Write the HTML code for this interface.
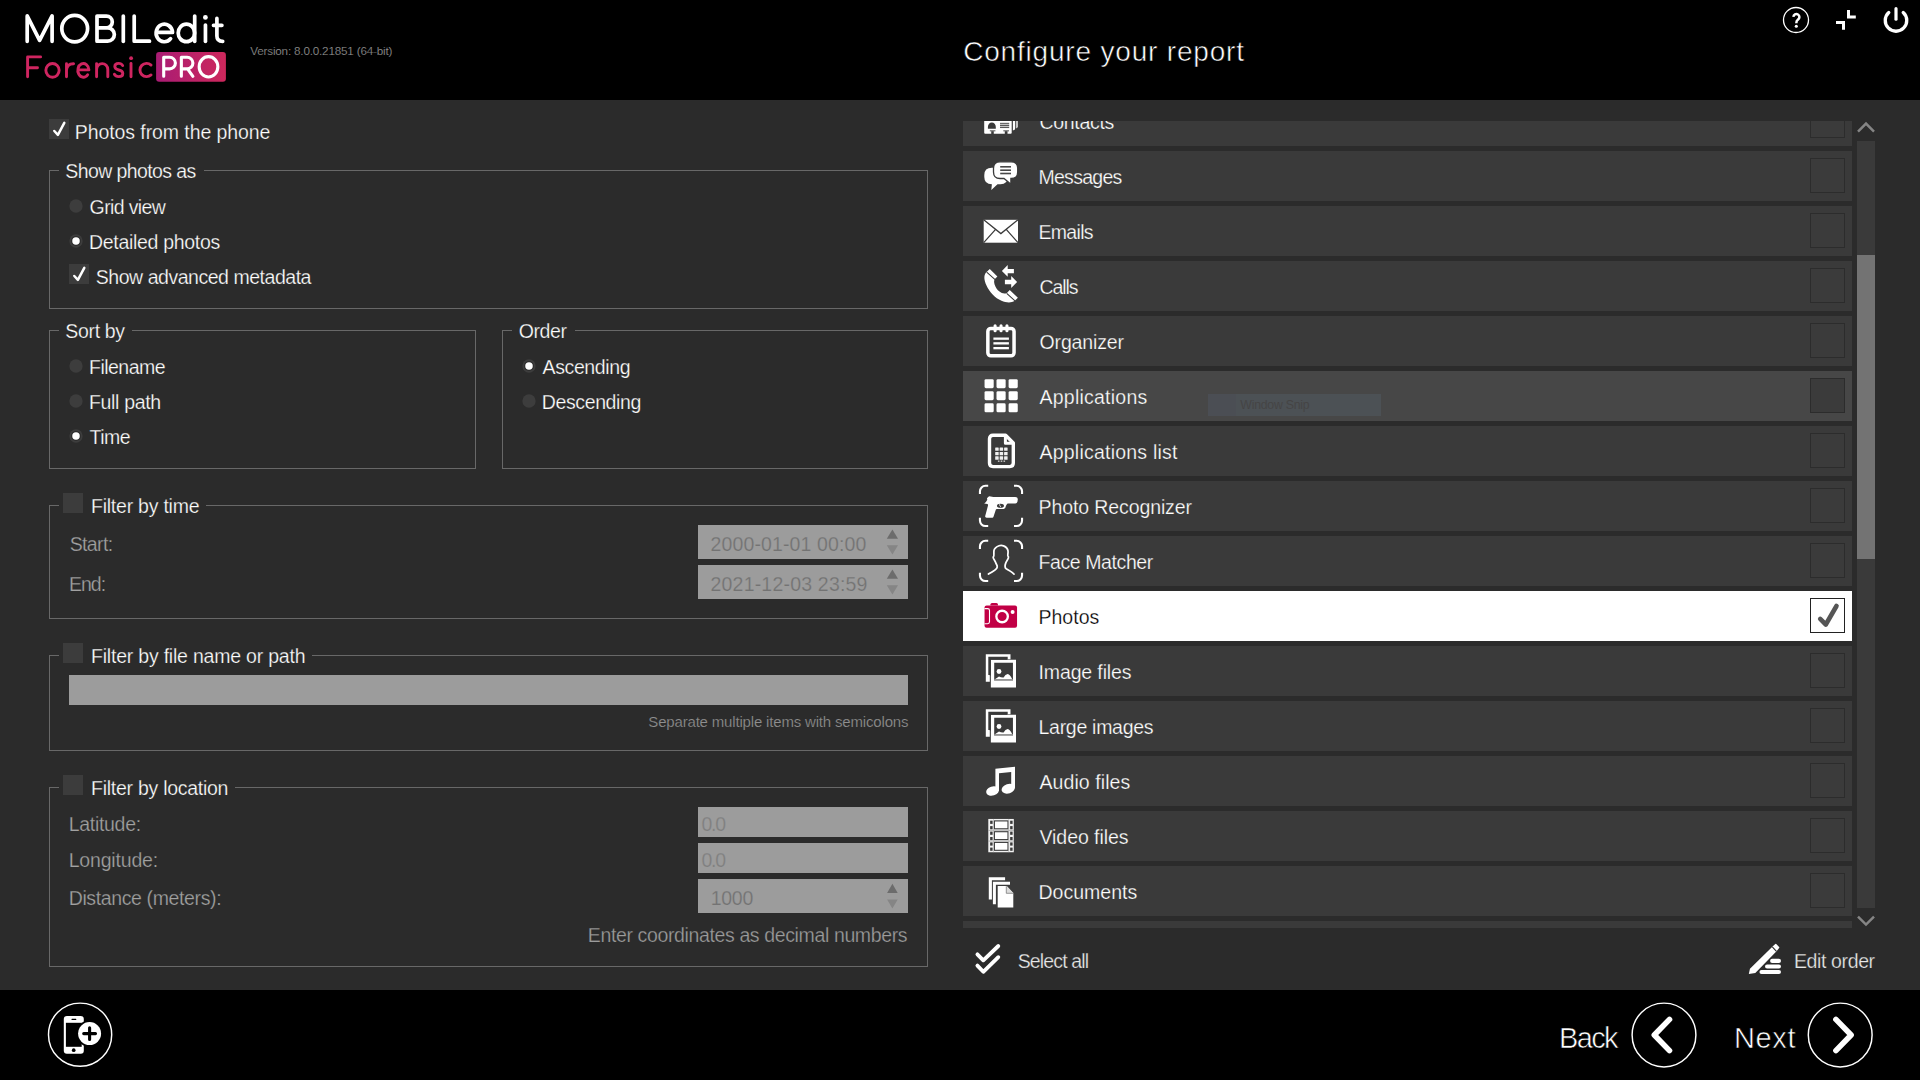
<!DOCTYPE html>
<html lang="en"><head><meta charset="utf-8"><title>MOBILedit Forensic PRO - Configure your report</title>
<style>
html,body{margin:0;padding:0;width:1920px;height:1080px;overflow:hidden;background:#000;font-family:"Liberation Sans",sans-serif;}
body{position:relative}
.hdr{position:absolute;left:0;top:0;width:1920px;height:100px;background:#000}
.main{position:absolute;left:0;top:100px;width:1920px;height:890px;background:#2b2b2b}
.ftr{position:absolute;left:0;top:990px;width:1920px;height:90px;background:#000}
.t{position:absolute;white-space:nowrap;font-family:"Liberation Sans",sans-serif;}
.abs{position:absolute}
.gb{position:absolute;border:1px solid #686868;box-sizing:border-box}
.gap{position:absolute;height:1px;background:#2b2b2b}
.chk{position:absolute;width:20px;height:20px;background:#3c3c3c}
.rad{position:absolute;width:13px;height:13px;border-radius:50%;background:#3c3c3c}
.rad.on::after{content:"";position:absolute;left:3px;top:3px;width:7px;height:7px;border-radius:50%;background:#fff}
.inp{position:absolute;background:#9c9c9c}
.list{position:absolute;overflow:hidden}
.row{position:absolute;left:0;width:889px;height:50px;background:#3a3a3a}
.row.hov{background:#474747}
.row.sel{background:#fff}
.cb{position:absolute;left:847px;top:7px;width:35px;height:35px;box-sizing:border-box;border:1px solid #2c2c2c;background:#3b3b3b}
.row.hov .cb{background:#3b3b3b}
.row.sel .cb{background:#fff;border-color:#222}
.ic{position:absolute}
svg{position:absolute;overflow:visible}
</style></head><body>

<div class="hdr"></div><div class="main"></div><div class="ftr"></div>
<svg style="left:0;top:0" width="240" height="100" viewBox="0 0 240 100">
<defs><linearGradient id="pg" x1="0" y1="0" x2="1" y2="0"><stop offset="0" stop-color="#a91c74"/><stop offset="1" stop-color="#cd285c"/></linearGradient></defs>
<g fill="none" stroke="#fff" stroke-width="3.7" stroke-linecap="round" stroke-linejoin="round">
<path d="M27.2 41.3 V15.9 L39.6 40.3 L52.1 15.9 V41.3"/>
<ellipse cx="74.7" cy="28.6" rx="12.9" ry="13.2"/>
<path d="M97 16.1 V41.2 M97 16.1 H106.4 A5.9 5.9 0 0 1 106.4 27.9 H97 M106.4 27.9 H107.7 A6.65 6.65 0 0 1 107.7 41.2 H97"/>
<path d="M123.3 16 V41.3"/>
<path d="M134.2 16 V41.2 H149.5"/>
<path d="M156.4 32.4 H172.5 A8.2 8.8 0 1 0 170.6 38.6"/>
<ellipse cx="186.4" cy="32.9" rx="8.2" ry="8.8"/><path d="M194.7 16 V41.3"/>
<path d="M205.45 25 V41.3"/>
<path d="M216.9 18.4 V36 Q216.9 41.3 222.7 41.3 M213.5 25.3 H221.9"/>
</g>
<circle cx="205.4" cy="17.4" r="2.4" fill="#fff"/>
<g fill="none" stroke="#cf2560" stroke-width="2.9" stroke-linecap="round" stroke-linejoin="round">
<path d="M27.6 76.8 V56.9 H40.6 M27.6 67.75 H37.5"/>
<ellipse cx="52.5" cy="70.35" rx="6.65" ry="6.85"/>
<path d="M66.5 63.8 V76.8 M66.5 70.3 Q66.8 63.6 73.6 63.7"/>
<path d="M77.9 69.9 H88.9 A5.55 6.85 0 1 0 87.65 74.75"/>
<path d="M96.6 63.6 V76.8 M96.6 69.5 A5.6 5.9 0 0 1 107.8 69.5 V76.8"/>
<path d="M122.7 65.6 C121.8 64 120.4 63.4 118.6 63.4 C116.2 63.4 114.8 64.9 114.8 66.6 C114.8 68.6 116.4 69.4 118.7 70 C121.2 70.6 122.8 71.5 122.8 73.4 C122.8 75.3 121.2 76.6 118.7 76.6 C116.7 76.6 115.2 75.8 114.4 74.3"/>
<path d="M131 63.4 V76.8"/>
<path d="M151.05 65.06 A6.65 6.65 0 1 0 151.05 74.94"/>
</g>
<circle cx="131.1" cy="58.2" r="1.9" fill="#cf2560"/>
<rect x="156.1" y="52.1" width="69.8" height="29.6" rx="3" fill="url(#pg)"/>
<g fill="none" stroke="#fff" stroke-width="3.1" stroke-linecap="round" stroke-linejoin="round">
<path d="M163.7 76.3 V57.3 H169.6 A5.8 5.8 0 0 1 169.6 68.9 H163.7"/>
<path d="M181.35 76.3 V57.3 H187.1 A5.8 5.8 0 0 1 187.1 68.9 H181.35 M187.6 68.9 L192.9 76.3"/>
<ellipse cx="208.5" cy="66.8" rx="9.35" ry="10.15"/>
</g></svg>
<svg style="left:1770px;top:0" width="150" height="50" viewBox="1770 0 150 50">
<circle cx="1796" cy="20" r="12.5" fill="none" stroke="#fff" stroke-width="1.3"/>
<path d="M1793.4 16.9 A3 3 0 1 1 1798 19.6 Q1796.3 20.8 1796.3 23.2" fill="none" stroke="#fff" stroke-width="2.5"/>
<circle cx="1796.3" cy="26.2" r="1.55" fill="#fff"/>
<path d="M1848.5 10 V17.1 H1855.8 M1836 22.5 H1843.5 V29.8" fill="none" stroke="#fff" stroke-width="3"/>
<path d="M1888.8 12.5 A10.75 10.75 0 1 0 1903.2 12.5" fill="none" stroke="#fff" stroke-width="3.3" stroke-linecap="round"/>
<path d="M1896 8.7 V19.2" fill="none" stroke="#fff" stroke-width="3.2" stroke-linecap="round"/>
</svg>
<!-- LEFT PANEL -->
<div class="chk" style="left:49px;top:119px"></div>
<svg style="left:49px;top:119px" width="20" height="20" viewBox="0 0 20 20"><path d="M5.3 12 L8.9 15.8 L15.3 3.9" fill="none" stroke="#fff" stroke-width="2.5" stroke-linecap="round" stroke-linejoin="round"/></svg>

<div class="gb" style="left:49px;top:170px;width:879px;height:139px"></div>
<div class="gap" style="left:59px;top:170px;width:145px"></div>
<svg style="left:67.9px;top:197.9px" width="16" height="16" viewBox="0 0 16 16"><circle cx="8" cy="8" r="6.65" fill="#3d3d3d"/></svg>
<svg style="left:67.9px;top:233.0px" width="16" height="16" viewBox="0 0 16 16"><circle cx="8" cy="8" r="6.65" fill="#3d3d3d"/><circle cx="8" cy="8" r="4.9" fill="#2d2d2d"/><circle cx="8" cy="8" r="3.75" fill="#fff"/></svg>
<div class="chk" style="left:69px;top:264px"></div>
<svg style="left:69px;top:264px" width="20" height="20" viewBox="0 0 20 20"><path d="M5.3 12 L8.9 15.8 L15.3 3.9" fill="none" stroke="#fff" stroke-width="2.5" stroke-linecap="round" stroke-linejoin="round"/></svg>

<div class="gb" style="left:49px;top:330px;width:427px;height:139px"></div>
<div class="gap" style="left:59px;top:330px;width:73px"></div>
<svg style="left:67.9px;top:358.2px" width="16" height="16" viewBox="0 0 16 16"><circle cx="8" cy="8" r="6.65" fill="#3d3d3d"/></svg>
<svg style="left:67.9px;top:393.3px" width="16" height="16" viewBox="0 0 16 16"><circle cx="8" cy="8" r="6.65" fill="#3d3d3d"/></svg>
<svg style="left:67.9px;top:428.3px" width="16" height="16" viewBox="0 0 16 16"><circle cx="8" cy="8" r="6.65" fill="#3d3d3d"/><circle cx="8" cy="8" r="4.9" fill="#2d2d2d"/><circle cx="8" cy="8" r="3.75" fill="#fff"/></svg>

<div class="gb" style="left:502px;top:330px;width:426px;height:139px"></div>
<div class="gap" style="left:512px;top:330px;width:63px"></div>
<svg style="left:521.2px;top:358.2px" width="16" height="16" viewBox="0 0 16 16"><circle cx="8" cy="8" r="6.65" fill="#3d3d3d"/><circle cx="8" cy="8" r="4.9" fill="#2d2d2d"/><circle cx="8" cy="8" r="3.75" fill="#fff"/></svg>
<svg style="left:521.2px;top:393.3px" width="16" height="16" viewBox="0 0 16 16"><circle cx="8" cy="8" r="6.65" fill="#3d3d3d"/></svg>

<div class="gb" style="left:49px;top:505px;width:879px;height:114px"></div>
<div class="gap" style="left:59px;top:505px;width:147px"></div>
<div class="chk" style="left:63px;top:493px"></div>
<div class="inp" style="left:698px;top:525px;width:210px;height:34px"></div>
<div class="inp" style="left:698px;top:565px;width:210px;height:34px"></div>
<svg style="left:886px;top:525px" width="14" height="34" viewBox="0 0 14 34"><path d="M6.4 4.6 L12 13.7 L0.8 13.7Z" fill="#6c6c6c"/><path d="M0.8 20.3 L12 20.3 L6.4 29.4Z" fill="#858585"/></svg>
<svg style="left:886px;top:565px" width="14" height="34" viewBox="0 0 14 34"><path d="M6.4 4.6 L12 13.7 L0.8 13.7Z" fill="#6c6c6c"/><path d="M0.8 20.3 L12 20.3 L6.4 29.4Z" fill="#858585"/></svg>

<div class="gb" style="left:49px;top:655px;width:879px;height:96px"></div>
<div class="gap" style="left:59px;top:655px;width:253px"></div>
<div class="chk" style="left:63px;top:643px"></div>
<div class="inp" style="left:69px;top:675px;width:839px;height:30px"></div>

<div class="gb" style="left:49px;top:787px;width:879px;height:180px"></div>
<div class="gap" style="left:59px;top:787px;width:176px"></div>
<div class="chk" style="left:63px;top:775px"></div>
<div class="inp" style="left:698px;top:807px;width:210px;height:30px"></div>
<div class="inp" style="left:698px;top:843px;width:210px;height:30px"></div>
<div class="inp" style="left:698px;top:879px;width:210px;height:34px"></div>
<svg style="left:886px;top:879px" width="14" height="34" viewBox="0 0 14 34"><path d="M6.4 4.7 L11.7 13.9 L1.1 13.9Z" fill="#6c6c6c"/><path d="M1.1 20.4 L11.7 20.4 L6.4 29.4Z" fill="#858585"/></svg>

<div class="list" style="left:963px;top:121px;width:889px;height:807px">
<div class="row" style="top:-25px"><div class="cb"></div></div>
<svg class="ic" style="left:0;top:-25px" width="80" height="50" viewBox="0 0 80 50"><g fill="#fff"><path d="M49.9 12 H52 V33.4 L49.9 34.6 Z"/><path d="M52.8 12 H53.7 V32 L52.8 32.6 Z"/><path d="M54.1 12 H54.8 V31.3 L54.1 31.7 Z"/>
<rect x="21.2" y="12" width="27.5" height="25.8" rx="1"/></g>
<path d="M24.9 32.7 V31 A3.95 4.6 0 0 1 32.8 31 V32.7 Z" fill="#3a3a3a"/>
<g fill="#c4c4c4"><rect x="37" y="27.8" width="9.2" height="1.1"/><rect x="37" y="29.95" width="9.2" height="1.1"/></g>
<g fill="#484848"><rect x="37" y="26.85" width="9.2" height="0.95"/><rect x="37" y="28.95" width="9.2" height="0.95"/><rect x="37" y="31.1" width="9.2" height="0.95"/></g>
<g fill="#3a3a3a"><rect x="26.8" y="34.4" width="5.6" height="0.9"/><rect x="28.25" y="35.2" width="2.5" height="2.8"/><rect x="40.3" y="34.4" width="5.7" height="0.9"/><rect x="41.8" y="35.2" width="2.7" height="2.8"/></g></svg>
<div class="row" style="top:30px"><div class="cb"></div></div>
<svg class="ic" style="left:0;top:30px" width="80" height="50" viewBox="0 0 80 50"><path d="M28.8 16.7 H37.5 Q44.8 16.7 44.8 24 V26 Q44.8 33.3 37.5 33.3 H34.5 L28.3 38.9 L28.9 33.3 H28.8 Q21.3 33.3 21.3 26 V24 Q21.3 16.7 28.8 16.7 Z" fill="#fff"/>
<path d="M37 10.8 H48.2 Q54.7 10.8 54.7 17.3 V21 Q54.7 27.5 48.2 27.5 H47.9 V33.2 L41 27.5 H37 Q30.5 27.5 30.5 21 V17.3 Q30.5 10.8 37 10.8 Z" fill="#fff" stroke="#3a3a3a" stroke-width="1.3"/>
<g fill="#484848"><rect x="37.2" y="15" width="10.8" height="1.6"/><rect x="37.2" y="18.4" width="10.8" height="1.6"/><rect x="37.2" y="21.7" width="10.8" height="1.6"/></g></svg>
<div class="row" style="top:85px"><div class="cb"></div></div>
<svg class="ic" style="left:0;top:85px" width="80" height="50" viewBox="0 0 80 50"><rect x="20.7" y="13.8" width="34.3" height="22.9" fill="#fff"/>
<path d="M20.7 13.8 L37.9 27.6 L55 13.8 M20.7 36.7 L32.6 23.4 M55 36.7 L43.2 23.4" fill="none" stroke="#3a3a3a" stroke-width="1.25"/></svg>
<div class="row" style="top:140px"><div class="cb"></div></div>
<svg class="ic" style="left:0;top:140px" width="80" height="50" viewBox="0 0 80 50"><path d="M26.8 8.1 L34.4 15.6 L31.9 18.1 C30.8 19.5 31 21.5 31.6 23.4 C32.5 26.3 34.2 28.7 36.5 30.6 C38.6 32.4 41.2 33.2 43.9 32.1 L46.7 29 L54.9 36.7 L51.5 40 C48.5 42 43 41.8 38.5 39.8 C32 37 26.5 31 23.5 24.5 C21 19 20.6 14.5 23 11.5 Z" fill="#fff"/>
<path d="M23.7 11.2 L32.1 18.6 M43.7 32.3 L52 39.8" fill="none" stroke="#3a3a3a" stroke-width="1.1"/>
<path d="M38.9 9.9 L44.7 4.1 V7.9 H50.9 V12.2 H44.7 V15.8 Z M54.1 20.9 L48.2 15.1 V18.8 H41.9 V23.2 H48.2 V27 Z" fill="#fff"/></svg>
<div class="row" style="top:195px"><div class="cb"></div></div>
<svg class="ic" style="left:0;top:195px" width="80" height="50" viewBox="0 0 80 50"><rect x="24.85" y="12.45" width="26.2" height="27.35" rx="3" fill="none" stroke="#fff" stroke-width="3.5"/>
<g stroke="#fff" stroke-width="3.1" stroke-linecap="round"><path d="M32.1 9.7 V14.8 M38.05 9.7 V14.8 M43.95 9.7 V14.8"/></g>
<g fill="#fff"><rect x="30.4" y="21.5" width="15.5" height="2.3"/><rect x="30.4" y="26.2" width="15.5" height="2.3"/><rect x="30.4" y="31" width="15.5" height="2.3"/></g></svg>
<div class="row hov" style="top:250px"><div class="cb"></div></div>
<svg class="ic" style="left:0;top:250px" width="80" height="50" viewBox="0 0 80 50"><g fill="#fff"><rect x="21.55" y="8.15" width="9.15" height="9.05" rx="1.4"/><rect x="33.5" y="8.15" width="9.15" height="9.05" rx="1.4"/><rect x="45.6" y="8.15" width="9.15" height="9.05" rx="1.4"/><rect x="21.55" y="20.2" width="9.15" height="9.05" rx="1.4"/><rect x="33.5" y="20.2" width="9.15" height="9.05" rx="1.4"/><rect x="45.6" y="20.2" width="9.15" height="9.05" rx="1.4"/><rect x="21.55" y="32.3" width="9.15" height="9.05" rx="1.4"/><rect x="33.5" y="32.3" width="9.15" height="9.05" rx="1.4"/><rect x="45.6" y="32.3" width="9.15" height="9.05" rx="1.4"/></g></svg>
<div class="row" style="top:305px"><div class="cb"></div></div>
<svg class="ic" style="left:0;top:305px" width="80" height="50" viewBox="0 0 80 50"><path d="M26.5 12.8 Q26.5 9.3 30 9.3 H42.6 L50.3 17 V37.1 Q50.3 40.6 46.8 40.6 H30 Q26.5 40.6 26.5 37.1 Z" fill="none" stroke="#fff" stroke-width="3.4" stroke-linejoin="round"/>
<path d="M42.4 9.6 V17.2 H50" fill="none" stroke="#fff" stroke-width="3" stroke-linejoin="round"/>
<g fill="#f0f0f0"><rect x="32.2" y="21.4" width="3.5" height="3.4" rx="0.5"/><rect x="36.65" y="21.4" width="3.5" height="3.4" rx="0.5"/><rect x="41.1" y="21.4" width="3.5" height="3.4" rx="0.5"/><rect x="32.2" y="25.95" width="3.5" height="3.4" rx="0.5"/><rect x="36.65" y="25.95" width="3.5" height="3.4" rx="0.5"/><rect x="41.1" y="25.95" width="3.5" height="3.4" rx="0.5"/><rect x="32.2" y="30.35" width="3.5" height="3.4" rx="0.5"/><rect x="36.65" y="30.35" width="3.5" height="3.4" rx="0.5"/><rect x="41.1" y="30.35" width="3.5" height="3.4" rx="0.5"/><rect x="34.9" y="34.6" width="1.6" height="1.1"/><rect x="37.7" y="34.6" width="1.6" height="1.1"/><rect x="40.5" y="34.6" width="1.6" height="1.1"/></g></svg>
<div class="row" style="top:360px"><div class="cb"></div></div>
<svg class="ic" style="left:0;top:360px" width="80" height="50" viewBox="0 0 80 50"><g fill="none" stroke="#fff" stroke-width="2.1"><path d="M16.95 13.1 V10.3 A5.5 5.5 0 0 1 22.45 4.8 H25.2"/><path d="M51 4.8 H53.55 A5.5 5.5 0 0 1 59.05 10.3 V13.1"/><path d="M16.95 36.8 V39.55 A5.5 5.5 0 0 0 22.45 45.05 H25.2"/><path d="M51 45.05 H53.55 A5.5 5.5 0 0 0 59.05 39.55 V36.8"/></g><path d="M26.3 15.2 L30.3 15.9 H52.1 Q54.8 15.9 54.8 18.2 Q54.9 22.5 52.1 22.55 H44.6 Q43.3 23.6 42.9 25 Q42.5 27.9 40.8 27.9 H33.9 Q33.1 27.9 32.9 28.6 L30.4 35.9 Q30.1 36.7 29.4 36.7 H23.6 Q21.8 36.7 22.2 35 L25 24.6 Q25.2 23.3 24.3 23.1 L21.2 22.55 Q23.2 21.3 24.3 18.8 L23.9 17.4 L25.1 16.1 Z" fill="#fff"/>
<ellipse cx="37.45" cy="24.8" rx="3.5" ry="2" fill="#3a3a3a"/><path d="M36.6 23.2 Q36.6 25.2 37.9 26" fill="none" stroke="#fff" stroke-width="0.8"/></svg>
<div class="row" style="top:415px"><div class="cb"></div></div>
<svg class="ic" style="left:0;top:415px" width="80" height="50" viewBox="0 0 80 50"><g fill="none" stroke="#fff" stroke-width="2.1"><path d="M16.95 13.1 V10.3 A5.5 5.5 0 0 1 22.45 4.8 H25.2"/><path d="M51 4.8 H53.55 A5.5 5.5 0 0 1 59.05 10.3 V13.1"/><path d="M16.95 36.8 V39.55 A5.5 5.5 0 0 0 22.45 45.05 H25.2"/><path d="M51 45.05 H53.55 A5.5 5.5 0 0 0 59.05 39.55 V36.8"/></g><path d="M25.44 38.1 L29.00 35.89 Q32.56 33.67 33.33 32.69 Q34.1 31.7 34.22 30.80 Q34.33 29.9 33.55 28.55 Q32.78 27.2 32.44 26.10 Q32.1 25 31.21 23.66 Q30.33 22.33 30.21 21.66 Q30.1 21 30.55 20.55 Q31 20.1 30.89 17.89 Q30.78 15.67 30.99 14.34 Q31.2 13 32.55 11.78 Q33.9 10.56 36.11 9.78 Q38.33 9 40.55 9.89 Q42.78 10.78 43.78 12.11 Q44.78 13.44 44.99 14.77 Q45.2 16.1 44.88 18.00 Q44.56 19.9 45.12 20.45 Q45.67 21 45.34 22.10 Q45 23.2 44.10 24.55 Q43.2 25.9 42.55 27.65 Q41.9 29.4 42.10 30.75 Q42.3 32.1 42.98 32.65 Q43.67 33.2 45.67 34.20 Q47.67 35.2 49.34 36.65 L51 38.1" fill="none" stroke="#fff" stroke-width="1.75" stroke-linecap="round" stroke-linejoin="round"/></svg>
<div class="row sel" style="top:470px"><div class="cb"></div></div>
<svg class="ic" style="left:0;top:470px" width="80" height="50" viewBox="0 0 80 50"><path d="M27.4 14.6 V13.6 Q27.4 12 29 12 H33.4 Q35 12 35 13.6 V14.6 Z" fill="#c10045"/>
<rect x="21.55" y="14.6" width="32.5" height="22.1" rx="2" fill="#c10045"/>
<circle cx="39.1" cy="25.5" r="5.75" fill="none" stroke="#fff" stroke-width="2.3"/>
<circle cx="49.6" cy="20.9" r="2" fill="#fff"/>
<path d="M21.55 17.6 H24.6 Q26.5 17.6 26.5 19.5 V30.8 Q26.5 32.7 24.6 32.7 H21.55" fill="none" stroke="#fff" stroke-width="1.1"/></svg>
<div class="row" style="top:525px"><div class="cb"></div></div>
<svg class="ic" style="left:0;top:525px" width="80" height="50" viewBox="0 0 80 50"><path d="M22.8 8.15 H47.5 V13.2 H44.7 V10.7 H25.3 V29 H26.8 V35.85 H22.8 Z" fill="#fff"/>
<path d="M27.85 13.75 H53 V41.55 H27.85 Z M31.2 16.8 V34.6 H49.95 V16.8 Z" fill="#fff" fill-rule="evenodd" stroke="#3a3a3a" stroke-width="0"/>
<circle cx="36" cy="25.5" r="2.4" fill="#fff"/>
<path d="M31.9 33.3 L36 30.5 Q38.3 31.8 40.6 31.5 Q42.3 28.2 44.7 28 Q47 28.2 49.2 33.3 Z" fill="#fff"/>
<rect x="31.2" y="33.3" width="18.75" height="1.3" fill="#aaa"/>
<path d="M27.35 29.6 V13.25 H44.2" fill="none" stroke="#3a3a3a" stroke-width="1"/></svg>
<div class="row" style="top:580px"><div class="cb"></div></div>
<svg class="ic" style="left:0;top:580px" width="80" height="50" viewBox="0 0 80 50"><path d="M22.8 8.15 H47.5 V13.2 H44.7 V10.7 H25.3 V29 H26.8 V35.85 H22.8 Z" fill="#fff"/>
<path d="M27.85 13.75 H53 V41.55 H27.85 Z M31.2 16.8 V34.6 H49.95 V16.8 Z" fill="#fff" fill-rule="evenodd" stroke="#3a3a3a" stroke-width="0"/>
<circle cx="36" cy="25.5" r="2.4" fill="#fff"/>
<path d="M31.9 33.3 L36 30.5 Q38.3 31.8 40.6 31.5 Q42.3 28.2 44.7 28 Q47 28.2 49.2 33.3 Z" fill="#fff"/>
<rect x="31.2" y="33.3" width="18.75" height="1.3" fill="#aaa"/>
<path d="M27.35 29.6 V13.25 H44.2" fill="none" stroke="#3a3a3a" stroke-width="1"/></svg>
<div class="row" style="top:635px"><div class="cb"></div></div>
<svg class="ic" style="left:0;top:635px" width="80" height="50" viewBox="0 0 80 50"><path d="M32.4 12.7 L52 10.7 V31.8 H48.2 V15.9 L36 17.2 V34.8 H32.4 Z" fill="#fff"/>
<ellipse cx="29.6" cy="35" rx="6.6" ry="4.6" transform="rotate(-18 29.6 35)" fill="#fff"/>
<ellipse cx="45.3" cy="32.7" rx="6.9" ry="4.7" transform="rotate(-18 45.3 32.7)" fill="#fff"/></svg>
<div class="row" style="top:690px"><div class="cb"></div></div>
<svg class="ic" style="left:0;top:690px" width="80" height="50" viewBox="0 0 80 50"><rect x="25.3" y="7.95" width="25.5" height="33.3" fill="#f2f2f2"/><rect x="27.15" y="9.7" width="2.45" height="3.2" fill="#3a3a3a"/><rect x="47.15" y="9.7" width="2.45" height="3.2" fill="#3a3a3a"/><rect x="27.15" y="15.1" width="2.45" height="3.2" fill="#3a3a3a"/><rect x="47.15" y="15.1" width="2.45" height="3.2" fill="#3a3a3a"/><rect x="27.15" y="20.6" width="2.45" height="3.2" fill="#3a3a3a"/><rect x="47.15" y="20.6" width="2.45" height="3.2" fill="#3a3a3a"/><rect x="27.15" y="26" width="2.45" height="3.2" fill="#3a3a3a"/><rect x="47.15" y="26" width="2.45" height="3.2" fill="#3a3a3a"/><rect x="27.15" y="31.4" width="2.45" height="3.2" fill="#3a3a3a"/><rect x="47.15" y="31.4" width="2.45" height="3.2" fill="#3a3a3a"/><rect x="27.15" y="36.6" width="2.45" height="3.2" fill="#3a3a3a"/><rect x="47.15" y="36.6" width="2.45" height="3.2" fill="#3a3a3a"/><rect x="31.4" y="9.9" width="13.6" height="7.9" fill="#fff" stroke="#3a3a3a" stroke-width="1.1"/><rect x="31.4" y="20.7" width="13.6" height="7.9" fill="#fff" stroke="#3a3a3a" stroke-width="1.1"/><rect x="31.4" y="31.4" width="13.6" height="7.9" fill="#fff" stroke="#3a3a3a" stroke-width="1.1"/><rect x="25.3" y="18.95" width="25.5" height="0.6" fill="#9a9a9a"/><rect x="25.3" y="29.75" width="25.5" height="0.6" fill="#9a9a9a"/><rect x="30.3" y="7.95" width="0.5" height="33.3" fill="#aaa"/><rect x="45.6" y="7.95" width="0.5" height="33.3" fill="#aaa"/></svg>
<div class="row" style="top:745px"><div class="cb"></div></div>
<svg class="ic" style="left:0;top:745px" width="80" height="50" viewBox="0 0 80 50"><path d="M25.8 11.2 H42.1 V14.3 H28.9 V33.6 H25.8 Z" fill="#fff"/>
<path d="M29.9 15.8 H47 V18.8 H32.9 V38.2 H29.9 Z" fill="#fff"/>
<path d="M34.7 19.9 H43.65 L50.3 27 V41.55 H34.7 Z" fill="#fff"/>
<path d="M43.65 19.9 V27 H50.3 Z" fill="#dcdcdc"/><path d="M43.3 20.2 V27.3 H50.2" fill="none" stroke="#666" stroke-width="0.7"/></svg>
<div class="row" style="top:800px"></div>
<div class="t" style="left:76.50px;top:-10.69px;font-size:19.5px;line-height:25px;letter-spacing:-0.315px;color:#ffffff;-webkit-text-stroke:0.25px #3a3a3a">Contacts</div>
<div class="t" style="left:75.50px;top:44.31px;font-size:19.5px;line-height:25px;letter-spacing:-0.732px;color:#ffffff;-webkit-text-stroke:0.25px #3a3a3a">Messages</div>
<div class="t" style="left:75.50px;top:99.31px;font-size:19.5px;line-height:25px;letter-spacing:-0.692px;color:#ffffff;-webkit-text-stroke:0.25px #3a3a3a">Emails</div>
<div class="t" style="left:76.50px;top:154.31px;font-size:19.5px;line-height:25px;letter-spacing:-1.073px;color:#ffffff;-webkit-text-stroke:0.25px #3a3a3a">Calls</div>
<div class="t" style="left:76.50px;top:209.31px;font-size:19.5px;line-height:25px;letter-spacing:-0.140px;color:#ffffff;-webkit-text-stroke:0.25px #3a3a3a">Organizer</div>
<div class="t" style="left:76.50px;top:264.31px;font-size:19.5px;line-height:25px;letter-spacing:0.237px;color:#ffffff;-webkit-text-stroke:0.25px #474747">Applications</div>
<div class="t" style="left:76.50px;top:319.31px;font-size:19.5px;line-height:25px;letter-spacing:0.220px;color:#ffffff;-webkit-text-stroke:0.25px #3a3a3a">Applications list</div>
<div class="t" style="left:75.50px;top:374.31px;font-size:19.5px;line-height:25px;letter-spacing:-0.101px;color:#ffffff;-webkit-text-stroke:0.25px #3a3a3a">Photo Recognizer</div>
<div class="t" style="left:75.50px;top:429.31px;font-size:19.5px;line-height:25px;letter-spacing:-0.401px;color:#ffffff;-webkit-text-stroke:0.25px #3a3a3a">Face Matcher</div>
<div class="t" style="left:75.50px;top:484.31px;font-size:19.5px;line-height:25px;letter-spacing:0.008px;color:#000000;-webkit-text-stroke:0.25px #ffffff">Photos</div>
<div class="t" style="left:75.50px;top:539.31px;font-size:19.5px;line-height:25px;letter-spacing:-0.124px;color:#ffffff;-webkit-text-stroke:0.25px #3a3a3a">Image files</div>
<div class="t" style="left:75.50px;top:594.31px;font-size:19.5px;line-height:25px;letter-spacing:-0.282px;color:#ffffff;-webkit-text-stroke:0.25px #3a3a3a">Large images</div>
<div class="t" style="left:76.50px;top:649.31px;font-size:19.5px;line-height:25px;letter-spacing:0.078px;color:#ffffff;-webkit-text-stroke:0.25px #3a3a3a">Audio files</div>
<div class="t" style="left:76.50px;top:704.31px;font-size:19.5px;line-height:25px;letter-spacing:-0.057px;color:#ffffff;-webkit-text-stroke:0.25px #3a3a3a">Video files</div>
<div class="t" style="left:75.50px;top:759.31px;font-size:19.5px;line-height:25px;letter-spacing:0.016px;color:#ffffff;-webkit-text-stroke:0.25px #3a3a3a">Documents</div>
<div class="abs" style="left:245px;top:273px;width:173px;height:22px;background:#4c5155"></div><div class="abs" style="left:245px;top:273px;width:28px;height:22px;background:#4b4e54"></div>
<svg style="left:0;top:470px" width="889" height="50" viewBox="0 470 889 50"><path d="M857.2 497.9 L862.8 503.5 L873.5 485" fill="none" stroke="#555" stroke-width="4.6" stroke-linecap="round" stroke-linejoin="round"/></svg>
</div>
<div class="abs" style="left:1857px;top:141px;width:18px;height:767px;background:#3a3a3a"></div>
<div class="abs" style="left:1857px;top:255px;width:18px;height:304px;background:#737373"></div>
<svg style="left:1850px;top:115px" width="32" height="820" viewBox="1850 115 32 820">
<path d="M1858 131.6 L1866 123.6 L1874 131.6" fill="none" stroke="#858585" stroke-width="2.5"/>
<path d="M1858 916.6 L1866 924.6 L1874 916.6" fill="none" stroke="#858585" stroke-width="2.5"/></svg>
<svg style="left:0;top:930px" width="1920" height="150" viewBox="0 930 1920 150">
<!-- select all -->
<g fill="none" stroke="#fff" stroke-width="3.8" stroke-linecap="round" stroke-linejoin="round">
<path d="M977.4 954.3 L983.3 960.3 L998.3 946"/><path d="M977.4 965.6 L983.3 971.8 L998.3 957.2"/></g>
<!-- edit order -->
<g fill="#fff"><path d="M1748.8 973.9 L1749.95 968.8 L1773.1 946.1 L1775.3 944.1 Q1775.9 943.6 1776.5 944.2 L1779.1 946.9 Q1779.6 947.5 1779.1 948.1 L1776.8 951 L1755.3 973 Z"/>
<rect x="1770.1" y="958.85" width="10.9" height="4.15" rx="2.07"/><rect x="1765" y="964.4" width="16" height="4.15" rx="2.07"/><rect x="1759.45" y="969.95" width="21.55" height="4.15" rx="2.07"/></g>
<path d="M1772.3 946.8 L1776.5 951.3" stroke="#2b2b2b" stroke-width="1.1" fill="none"/>
<!-- add phone -->
<circle cx="80.1" cy="1034.7" r="31.6" fill="none" stroke="#fff" stroke-width="1.45"/>
<rect x="63.8" y="1016" width="20" height="37.8" rx="3" fill="#fff"/>
<rect x="65.9" y="1022.8" width="15.8" height="24" fill="#000"/>
<rect x="71.4" y="1018.7" width="5" height="1.2" rx="0.6" fill="#000"/>
<circle cx="73.7" cy="1050.2" r="1.85" fill="#000"/>
<circle cx="89.6" cy="1033.6" r="13.3" fill="#000"/>
<circle cx="89.6" cy="1033.6" r="11.5" fill="#fff"/>
<path d="M89.6 1027.7 V1039.5 M83.7 1033.6 H95.5" stroke="#000" stroke-width="3.1" stroke-linecap="round" fill="none"/>
<!-- back / next -->
<circle cx="1664" cy="1035" r="31.9" fill="none" stroke="#fff" stroke-width="1.45"/>
<circle cx="1840.2" cy="1035" r="31.9" fill="none" stroke="#fff" stroke-width="1.45"/>
<g fill="none" stroke="#fff" stroke-width="5.6" stroke-linecap="round" stroke-linejoin="round">
<path d="M1669.5 1019.4 L1654.3 1035 L1669.5 1050.6"/>
<path d="M1835.9 1019.4 L1851.1 1035 L1835.9 1050.6"/></g>
</svg>
<div class="t" style="left:963.20px;top:34.05px;font-size:28px;line-height:36px;letter-spacing:0.810px;color:#ffffff;-webkit-text-stroke:0.57px #000000">Configure your report</div>
<div class="t" style="left:250.30px;top:43.33px;font-size:11.7px;line-height:15px;letter-spacing:-0.193px;color:#8f8f8f;-webkit-text-stroke:0.15px #000000">Version: 8.0.0.21851 (64-bit)</div>
<div class="t" style="left:74.80px;top:119.86px;font-size:19.5px;line-height:25px;letter-spacing:-0.087px;color:#ffffff;-webkit-text-stroke:0.25px #2b2b2b">Photos from the phone</div>
<div class="t" style="left:65.30px;top:159.06px;font-size:19.5px;line-height:25px;letter-spacing:-0.593px;color:#ffffff;-webkit-text-stroke:0.25px #2b2b2b">Show photos as</div>
<div class="t" style="left:89.60px;top:194.76px;font-size:19.5px;line-height:25px;letter-spacing:-0.623px;color:#ffffff;-webkit-text-stroke:0.25px #2b2b2b">Grid view</div>
<div class="t" style="left:89.00px;top:229.76px;font-size:19.5px;line-height:25px;letter-spacing:-0.304px;color:#ffffff;-webkit-text-stroke:0.25px #2b2b2b">Detailed photos</div>
<div class="t" style="left:95.80px;top:264.76px;font-size:19.5px;line-height:25px;letter-spacing:-0.469px;color:#ffffff;-webkit-text-stroke:0.25px #2b2b2b">Show advanced metadata</div>
<div class="t" style="left:65.30px;top:319.06px;font-size:19.5px;line-height:25px;letter-spacing:-0.338px;color:#ffffff;-webkit-text-stroke:0.25px #2b2b2b">Sort by</div>
<div class="t" style="left:89.00px;top:354.76px;font-size:19.5px;line-height:25px;letter-spacing:-0.522px;color:#ffffff;-webkit-text-stroke:0.25px #2b2b2b">Filename</div>
<div class="t" style="left:89.00px;top:390.06px;font-size:19.5px;line-height:25px;letter-spacing:-0.331px;color:#ffffff;-webkit-text-stroke:0.25px #2b2b2b">Full path</div>
<div class="t" style="left:89.60px;top:425.06px;font-size:19.5px;line-height:25px;letter-spacing:-0.555px;color:#ffffff;-webkit-text-stroke:0.25px #2b2b2b">Time</div>
<div class="t" style="left:518.70px;top:319.06px;font-size:19.5px;line-height:25px;letter-spacing:-0.388px;color:#ffffff;-webkit-text-stroke:0.25px #2b2b2b">Order</div>
<div class="t" style="left:542.50px;top:354.76px;font-size:19.5px;line-height:25px;letter-spacing:-0.377px;color:#ffffff;-webkit-text-stroke:0.25px #2b2b2b">Ascending</div>
<div class="t" style="left:541.80px;top:390.06px;font-size:19.5px;line-height:25px;letter-spacing:-0.382px;color:#ffffff;-webkit-text-stroke:0.25px #2b2b2b">Descending</div>
<div class="t" style="left:91.00px;top:494.06px;font-size:19.5px;line-height:25px;letter-spacing:-0.235px;color:#ffffff;-webkit-text-stroke:0.25px #2b2b2b">Filter by time</div>
<div class="t" style="left:69.70px;top:531.86px;font-size:19.5px;line-height:25px;letter-spacing:-0.636px;color:#a2a2a2;-webkit-text-stroke:0.25px #2b2b2b">Start:</div>
<div class="t" style="left:68.90px;top:571.56px;font-size:19.5px;line-height:25px;letter-spacing:-0.965px;color:#a2a2a2;-webkit-text-stroke:0.25px #2b2b2b">End:</div>
<div class="t" style="left:710.50px;top:531.66px;font-size:19.5px;line-height:25px;letter-spacing:0.132px;color:#737373;-webkit-text-stroke:0.25px #9c9c9c">2000-01-01 00:00</div>
<div class="t" style="left:710.50px;top:571.86px;font-size:19.5px;line-height:25px;letter-spacing:0.199px;color:#737373;-webkit-text-stroke:0.25px #9c9c9c">2021-12-03 23:59</div>
<div class="t" style="left:91.00px;top:644.06px;font-size:19.5px;line-height:25px;letter-spacing:-0.210px;color:#ffffff;-webkit-text-stroke:0.25px #2b2b2b">Filter by file name or path</div>
<div class="t" style="left:648.30px;top:712.04px;font-size:15px;line-height:20px;letter-spacing:-0.173px;color:#8f8f8f;-webkit-text-stroke:0.19px #2b2b2b">Separate multiple items with semicolons</div>
<div class="t" style="left:91.10px;top:776.16px;font-size:19.5px;line-height:25px;letter-spacing:-0.272px;color:#ffffff;-webkit-text-stroke:0.25px #2b2b2b">Filter by location</div>
<div class="t" style="left:68.70px;top:812.16px;font-size:19.5px;line-height:25px;letter-spacing:-0.299px;color:#a2a2a2;-webkit-text-stroke:0.25px #2b2b2b">Latitude:</div>
<div class="t" style="left:68.70px;top:847.76px;font-size:19.5px;line-height:25px;letter-spacing:-0.174px;color:#a2a2a2;-webkit-text-stroke:0.25px #2b2b2b">Longitude:</div>
<div class="t" style="left:68.70px;top:885.66px;font-size:19.5px;line-height:25px;letter-spacing:-0.375px;color:#a2a2a2;-webkit-text-stroke:0.25px #2b2b2b">Distance (meters):</div>
<div class="t" style="left:701.50px;top:811.66px;font-size:19.5px;line-height:25px;letter-spacing:-1.231px;color:#808080;-webkit-text-stroke:0.25px #9c9c9c">0.0</div>
<div class="t" style="left:701.50px;top:847.66px;font-size:19.5px;line-height:25px;letter-spacing:-1.231px;color:#808080;-webkit-text-stroke:0.25px #9c9c9c">0.0</div>
<div class="t" style="left:710.80px;top:885.76px;font-size:19.5px;line-height:25px;letter-spacing:-0.312px;color:#737373;-webkit-text-stroke:0.25px #9c9c9c">1000</div>
<div class="t" style="left:587.80px;top:922.66px;font-size:19.5px;line-height:25px;letter-spacing:-0.371px;color:#9c9c9c;-webkit-text-stroke:0.25px #2b2b2b">Enter coordinates as decimal numbers</div>
<div class="t" style="left:1017.70px;top:949.06px;font-size:19.5px;line-height:25px;letter-spacing:-0.866px;color:#e8e8e8;-webkit-text-stroke:0.25px #2b2b2b">Select all</div>
<div class="t" style="left:1794.00px;top:948.86px;font-size:19.5px;line-height:25px;letter-spacing:-0.383px;color:#e8e8e8;-webkit-text-stroke:0.25px #2b2b2b">Edit order</div>
<div class="t" style="left:1559.00px;top:1019.22px;font-size:29px;line-height:38px;letter-spacing:-1.624px;color:#ffffff;-webkit-text-stroke:0.59px #000000">Back</div>
<div class="t" style="left:1734.00px;top:1019.22px;font-size:29px;line-height:38px;letter-spacing:0.610px;color:#ffffff;-webkit-text-stroke:0.59px #000000">Next</div>
<div class="t" style="left:1240.30px;top:396.93px;font-size:12.3px;line-height:16px;letter-spacing:-0.242px;color:#454343;-webkit-text-stroke:0.16px #4c5155">Window Snip</div>
</body></html>
